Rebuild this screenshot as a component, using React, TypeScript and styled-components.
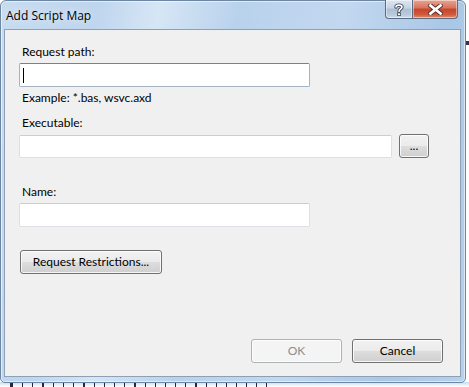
import styled, { createGlobalStyle } from "styled-components"

const Global = createGlobalStyle`
  html, body {
    margin: 0;
    padding: 0;
    background: #ffffff;
  }
  * {
    box-sizing: border-box;
  }
`

const Desktop = styled.div`
  position: relative;
  width: 469px;
  height: 387px;
  overflow: hidden;
  background: #ffffff;
  font-family: Lato, "Open Sans", sans-serif;
  font-size: 12px;
  color: #000;
`

// bits of the page that sits behind the dialog
const BehindStrip = styled.div`
  position: absolute;
  left: 0;
  top: 382px;
  width: 469px;
  height: 5px;
  display: flex;
  gap: 9px;
  padding-left: 10px;
  background: linear-gradient(to bottom, #c6dcf2, #ffffff);
`

const Mark = styled.div<{ $w?: number }>`
  width: ${(p) => p.$w ?? 1}px;
  height: 5px;
  background: #2c2438;
`

const BehindBar = styled.div`
  position: absolute;
  left: 465px;
  top: 41px;
  width: 4px;
  height: 4px;
  background: #3a2f4a;
`

const Window = styled.div`
  position: absolute;
  left: 0;
  top: 0;
  width: 466px;
  height: 383px;
  display: flex;
  flex-direction: column;
  border: 1px solid #6d87a3;
  border-radius: 6px 6px 5px 5px;
  background: linear-gradient(
    100deg,
    #c8dcf0 0%,
    #bed5ee 18%,
    #d6e6f5 30%,
    #b9d2ec 45%,
    #c2d8ef 65%,
    #a9c7e6 85%,
    #b8d1ec 100%
  );
  box-shadow: inset 0 0 0 1px rgba(255, 255, 255, 0.55);
`

const TitleBar = styled.div`
  display: flex;
  align-items: flex-start;
  height: 28px;
  padding-left: 5px;
`

const Title = styled.div`
  flex: 1;
  padding-top: 6px;
  font-family: "Open Sans", sans-serif;
  font-size: 12px;
  color: #000;
  text-shadow: 0 0 8px rgba(255, 255, 255, 0.9);
`

const Caption = styled.div`
  display: flex;
  margin-top: -1px;
  margin-right: 7px;
`

const CaptionButton = styled.div<{ $close?: boolean }>`
  display: flex;
  align-items: center;
  justify-content: center;
  height: 19px;
  width: ${(p) => (p.$close ? "45px" : "28px")};
  border: 1px solid #5a6b80;
  border-top: none;
  border-radius: ${(p) => (p.$close ? "0 0 4px 0" : "0 0 0 4px")};
  border-left: ${(p) => (p.$close ? "none" : "1px solid #5a6b80")};
  background: ${(p) =>
    p.$close
      ? "linear-gradient(to bottom, #e8a493 0%, #d6735c 45%, #c4452b 50%, #d0583a 80%, #e48b6c 100%)"
      : "linear-gradient(to bottom, #dde7f1 0%, #c6d4e3 45%, #aebfd3 50%, #b8c9dc 80%, #cfdcea 100%)"};
  box-shadow: inset 0 0 0 1px rgba(255, 255, 255, 0.45);
`

const Client = styled.div`
  flex: 1;
  display: flex;
  flex-direction: column;
  margin: 0 4px 5px 3px;
  padding: 13px 15px 0 14px;
  background: #f0f0f0;
  border: 1px solid #8ea0b6;
`

const Label = styled.div<{ $gap?: number }>`
  height: 17px;
  line-height: 17px;
  padding-left: 3px;
  margin-top: ${(p) => p.$gap ?? 0}px;
  margin-bottom: 3px;
`

const Hint = styled.div`
  height: 17px;
  line-height: 17px;
  padding-left: 3px;
  margin-top: 2px;
`

const Field = styled.div<{ $w: number; $h?: number; $focus?: boolean }>`
  position: relative;
  width: ${(p) => p.$w}px;
  height: ${(p) => p.$h ?? 24}px;
  background: #fff;
  border: 1px solid ${(p) => (p.$focus ? "#a3b3c4" : "#dcdfe3")};
  border-top-color: ${(p) => (p.$focus ? "#718396" : "#c9ccd0")};
  border-radius: 2px;
`

const Caret = styled.div`
  position: absolute;
  left: 3px;
  top: 4px;
  width: 1px;
  height: 15px;
  background: #000;
`

const Row = styled.div<{ $gap?: number }>`
  display: flex;
  align-items: center;
  gap: 7px;
  margin-top: ${(p) => p.$gap ?? 0}px;
`

const Button = styled.div<{ $w: number; $disabled?: boolean; $indent?: number }>`
  display: flex;
  align-items: center;
  justify-content: center;
  width: ${(p) => p.$w}px;
  height: 24px;
  margin-left: ${(p) => p.$indent ?? 0}px;
  border: 1px solid ${(p) => (p.$disabled ? "#adb2b5" : "#707070")};
  border-radius: 3px;
  color: ${(p) => (p.$disabled ? "#8d8d8d" : "#000")};
  background: ${(p) =>
    p.$disabled
      ? "#f4f4f4"
      : "linear-gradient(to bottom, #f2f2f2 0%, #ebebeb 48%, #dddddd 52%, #cfcfcf 100%)"};
  box-shadow: inset 0 0 0 1px rgba(255, 255, 255, 0.8);
  line-height: 1;
`

const Footer = styled.div`
  margin-top: auto;
  display: flex;
  justify-content: flex-end;
  gap: 10px;
  padding-bottom: 13px;
  margin-right: 2px;
`

const marks = [3, 1, 1, 2, 1, 1, 1, 2, 1, 1, 1, 1, 2, 1, 1, 1, 1, 1, 2, 1, 1, 1, 1, 1, 1, 1]

export default function App() {
  return (
    <Desktop>
      <Global />
      <BehindStrip>
        {marks.map((w, i) => (
          <Mark key={i} $w={w} />
        ))}
      </BehindStrip>
      <BehindBar />
      <Window>
        <TitleBar>
          <Title>Add Script Map</Title>
          <Caption>
            <CaptionButton>
              <svg width="10" height="13" viewBox="0 0 10 13">
                <path
                  d="M2 4 C2 1.5 8 1.5 8 4 C8 6 5 6 5 8.5"
                  fill="none"
                  stroke="#3d4a5a"
                  strokeWidth="3.4"
                  strokeLinecap="round"
                />
                <path
                  d="M2 4 C2 1.5 8 1.5 8 4 C8 6 5 6 5 8.5"
                  fill="none"
                  stroke="#ffffff"
                  strokeWidth="1.6"
                  strokeLinecap="round"
                />
                <rect x="3.6" y="10" width="2.8" height="2.6" fill="#fff" stroke="#3d4a5a" strokeWidth="0.8" />
              </svg>
            </CaptionButton>
            <CaptionButton $close>
              <svg width="15" height="11" viewBox="0 0 15 11">
                <path d="M2.5 1.5 L12.5 9.5 M12.5 1.5 L2.5 9.5" stroke="#5a2a22" strokeWidth="4.6" strokeLinecap="square" />
                <path d="M2.5 1.5 L12.5 9.5 M12.5 1.5 L2.5 9.5" stroke="#ffffff" strokeWidth="2.8" strokeLinecap="square" />
              </svg>
            </CaptionButton>
          </Caption>
        </TitleBar>
        <Client>
          <Label>Request path:</Label>
          <Field $w={291} $focus>
            <Caret />
          </Field>
          <Hint>Example: *.bas, wsvc.axd</Hint>
          <Label $gap={8}>Executable:</Label>
          <Row>
            <Field $w={373} $h={23} />
            <Button $w={30}>...</Button>
          </Row>
          <Label $gap={25}>Name:</Label>
          <Field $w={291} />
          <Row $gap={23}>
            <Button $w={142} $indent={1}>
              Request Restrictions...
            </Button>
          </Row>
          <Footer>
            <Button $w={91} $disabled>
              OK
            </Button>
            <Button $w={91}>Cancel</Button>
          </Footer>
        </Client>
      </Window>
    </Desktop>
  )
}
